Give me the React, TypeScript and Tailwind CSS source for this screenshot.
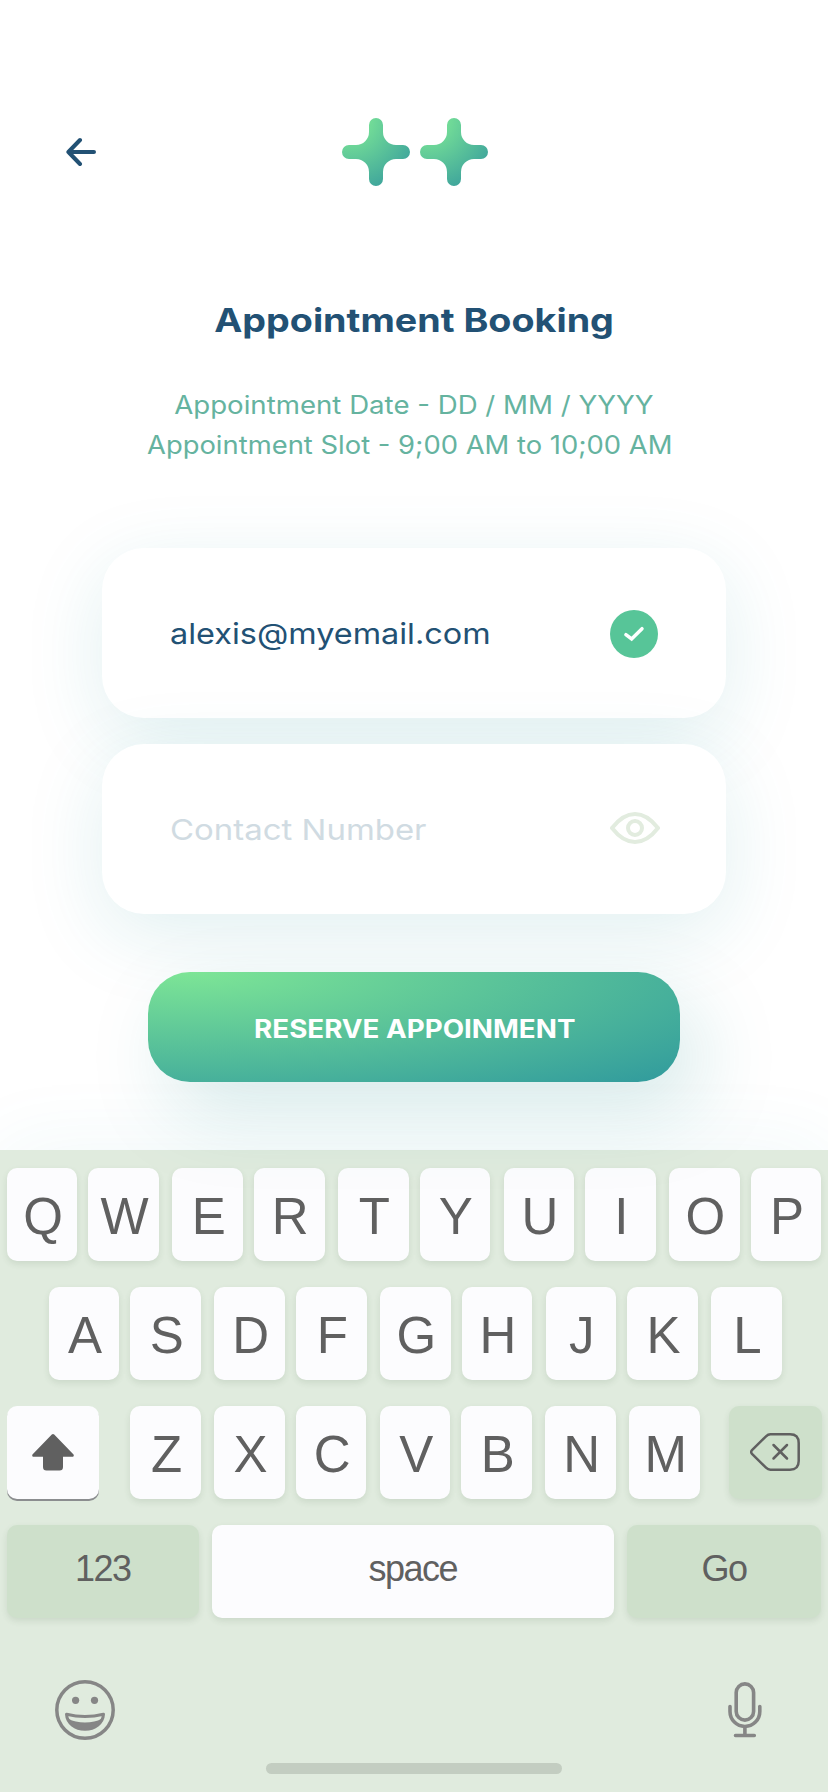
import React from "react";

function BackArrow() {
  return (
    <svg className="h-[30px] w-[30px]" viewBox="0 0 30 30" fill="none" stroke="#225174" strokeWidth="4" strokeLinecap="round" strokeLinejoin="round">
      <path d="M28 15H2.4M14 3 2.4 15 14 27" />
    </svg>
  );
}

function Star({ id }: { id: string }) {
  return (
    <svg className="h-[68px] w-[68px]" viewBox="0 0 68 68">
      <defs>
        <radialGradient id={id} gradientUnits="objectBoundingBox" cx="0.1" cy="0" fx="0.1" fy="0" r="1.35">
          <stop offset="0" stopColor="#7de596" />
          <stop offset="0.2" stopColor="#75df97" />
          <stop offset="1" stopColor="#2f949d" />
        </radialGradient>
      </defs>
      <path
        fill={`url(#${id})`}
        d="M27 7A7 7 0 0 1 41 7V14A13 13 0 0 0 54 27H61A7 7 0 0 1 61 41H54A13 13 0 0 0 41 54V61A7 7 0 0 1 27 61V54A13 13 0 0 0 14 41H7A7 7 0 0 1 7 27H14A13 13 0 0 0 27 14Z"
      />
    </svg>
  );
}

function CheckBadge() {
  return (
    <svg className="h-[48px] w-[48px]" viewBox="0 0 48 48">
      <circle cx="24" cy="24" r="24" fill="#57c598" />
      <path d="M15.900 24.700 21.600 29 32 18.700" fill="none" stroke="#fff" strokeWidth="3.500" strokeLinecap="round" strokeLinejoin="miter" />
    </svg>
  );
}

function Eye() {
  return (
    <svg className="h-[32px] w-[50px]" viewBox="0 0 50 32" fill="none" stroke="#e2ecdf" strokeWidth="4" strokeLinejoin="round">
      <path d="M2 16C9 7 17 2 25 2S41 7 48 16C41 25 33 30 25 30S9 25 2 16Z" />
      <circle cx="25" cy="16" r="7" />
    </svg>
  );
}

function ShiftIcon() {
  return (
    <svg className="h-[37px] w-[42px]" viewBox="0 0 42 37" fill="#606060">
      <path d="M19.8.6a1.7 1.7 0 0 1 2.4 0L41.3 20.2c1 1.1.4 2.6-1 2.6H31V33a3.5 3.5 0 0 1-3.5 3.5h-13A3.5 3.5 0 0 1 11 33V22.8H1.700c-1.400 0-2-1.500-1-2.600Z" />
    </svg>
  );
}

function BackspaceIcon() {
  return (
    <svg className="h-[38px] w-[50px]" viewBox="0 0 50 38" fill="none" stroke="#606060" strokeWidth="2.500" strokeLinecap="round" strokeLinejoin="round">
      <path d="M20.500 1.300H40C46 1.300 48.700 4 48.700 10V28C48.700 34 46 36.700 40 36.700H20.500C18.500 36.700 17.300 36 16 34.700L2 20.800C.9 19.700.9 18.300 2 17.200L16 3.300C17.300 2 18.500 1.300 20.500 1.300Z" />
      <path d="M23.500 12 37 25.500M37 12 23.500 25.500" />
    </svg>
  );
}

function EmojiIcon() {
  return (
    <svg className="h-[60px] w-[60px]" viewBox="0 0 60 60" fill="none" stroke="#868686">
      <circle cx="30" cy="30" r="28.200" strokeWidth="3.500" />
      <circle cx="20.600" cy="20.300" r="3.600" fill="#868686" stroke="none" />
      <circle cx="39.500" cy="20.300" r="3.600" fill="#868686" stroke="none" />
      <path d="M11.500 34.200Q30 39 48.500 34.200C48 43 40 49.200 30 49.200S12 43 11.500 34.200Z" strokeWidth="3" strokeLinejoin="round" />
      <path d="M13.500 38.800Q20 42.600 30 42.600T46.500 38.800C44 46 38 49.200 30 49.200S16 46 13.500 38.800Z" fill="#868686" stroke="none" />
    </svg>
  );
}

function MicIcon() {
  return (
    <svg className="h-[56px] w-[34px]" viewBox="0 0 34 56" fill="none" stroke="#868686" strokeWidth="3.600" strokeLinecap="round">
      <rect x="8.200" y="1.900" width="17.400" height="36.200" rx="8.700" />
      <path d="M2 24.600V29.500A14.900 15 0 0 0 31.800 29.500V24.600M16.900 44.500V53.400M7.500 53.500H26.300" />
    </svg>
  );
}

const keyBase =
  "flex h-[92.5px] shrink-0 items-center justify-center rounded-[10px] shadow-[0_3px_6px_rgba(60,90,60,0.12)]";

const narrow = "ml-[11px]";
const wide = "ml-[13.4px]";
const upperGaps = ["", narrow, wide, narrow, wide, narrow, wide, narrow, wide, wide];
const lowerGaps = ["", wide, narrow, wide, narrow, wide, wide];

function Letters({ keys, gaps }: { keys: string; gaps: string[] }) {
  return (
    <>
      {keys.split("").map((k, i) => (
        <div
          key={k}
          className={`${keyBase} w-[70.6px] bg-[#fcfcfe] pt-[5px] pl-[2px] text-[51px] leading-[60px] ${gaps[i]}`}
        >
          {k}
        </div>
      ))}
    </>
  );
}

export default function App() {
  return (
    <div className="flex min-h-[1792px] w-[828px] flex-col overflow-hidden bg-white font-['Inter','Liberation_Sans',sans-serif]">
      <div className="relative z-10 flex h-[1150px] flex-col">
        <header className="flex items-center pt-[118px] pl-[66px]">
          <BackArrow />
          <div className="ml-[246px] flex gap-[9.5px]">
            <Star id="starLeft" />
            <Star id="starRight" />
          </div>
        </header>

        <h1 className="mt-[114px] flex h-[40px] justify-center text-[33px] leading-[40px] font-bold text-[#225174]">
          <span className="shrink-0 scale-x-[1.142] whitespace-nowrap">Appointment Booking</span>
        </h1>
        <div className="mt-[45px] flex flex-col items-center text-[25px] leading-[40px] text-[#65b39f]">
          <p className="scale-x-[1.105] whitespace-nowrap">Appointment Date - DD / MM / YYYY</p>
          <p className="mr-[8px] scale-x-[1.096] whitespace-nowrap">Appointment Slot - 9;00 AM to 10;00 AM</p>
        </div>

        <div className="mt-[83px] flex flex-col items-center gap-[26px]">
          <div className="flex h-[170px] w-[624px] items-center justify-between rounded-[42px] bg-white pt-[2px] pr-[68px] pl-[68px] shadow-[0_20px_80px_rgba(20,140,150,0.13)]">
            <span className="origin-left scale-x-[1.118] text-[29px] text-[#225174]">alexis@myemail.com</span>
            <CheckBadge />
          </div>
          <div className="flex h-[170px] w-[624px] items-center justify-between rounded-[42px] bg-white pr-[66px] pb-[2px] pl-[68px] shadow-[0_20px_80px_rgba(20,140,150,0.13)]">
            <span className="origin-left scale-x-[1.136] pt-[4px] text-[29px] text-[#d0dbe2]">Contact Number</span>
            <Eye />
          </div>
        </div>

        <button className="mt-[58px] flex h-[110px] w-[532px] items-center justify-center self-center rounded-[42px] bg-[radial-gradient(ellipse_farthest-corner_at_8%_0%,#7de596_0%,#309a9d_100%)] pt-[5px] pl-[2px] text-[25px] font-bold text-white shadow-[20px_30px_80px_rgba(20,130,130,0.17)]">
          <span className="scale-x-[1.11] whitespace-nowrap">RESERVE APPOINMENT</span>
        </button>
      </div>

      <div className="flex h-[642px] flex-col bg-[#e0ebde] pt-[18px] font-['Liberation_Sans',Arial,sans-serif] text-[#606060] shadow-[0_0_80px_rgba(40,150,170,0.07)]">
        <div className="flex flex-col gap-[26.6px] pl-[6.8px]">
          <div className="flex">
            <Letters keys="QWERTYUIOP" gaps={[...upperGaps.slice(0, 9), narrow]} />
          </div>
          <div className="flex pl-[42px]">
            <Letters keys="ASDFGHJKL" gaps={upperGaps} />
          </div>
          <div className="flex">
            <div className="mr-[31px] flex h-[92.5px] w-[92.5px] shrink-0 items-center justify-center rounded-[10px] bg-[#fcfcfe] shadow-[0_2px_0_#8b8d8f]">
              <ShiftIcon />
            </div>
            <Letters keys="ZXCVBNM" gaps={lowerGaps} />
            <div className={`${keyBase} ml-[29px] w-[92.5px] bg-[#cee0cb]`}>
              <BackspaceIcon />
            </div>
          </div>
          <div className="flex gap-[13px] text-[36px] leading-[60px] tracking-[-1.5px]">
            <div className={`${keyBase} w-[192px] bg-[#cee0cb] pb-[6px]`}>123</div>
            <div className={`${keyBase} w-[402px] bg-[#fcfcfe] pb-[6px]`}>space</div>
            <div className={`${keyBase} w-[194.5px] bg-[#cee0cb] pb-[6px]`}>Go</div>
          </div>
        </div>
        <div className="mt-[62px] flex items-center justify-between pr-[66px] pl-[55px]">
          <EmojiIcon />
          <MicIcon />
        </div>
        <div className="mt-[23px] h-[11px] w-[296px] self-center rounded-full bg-[#c3cdc1]" />
      </div>
    </div>
  );
}
